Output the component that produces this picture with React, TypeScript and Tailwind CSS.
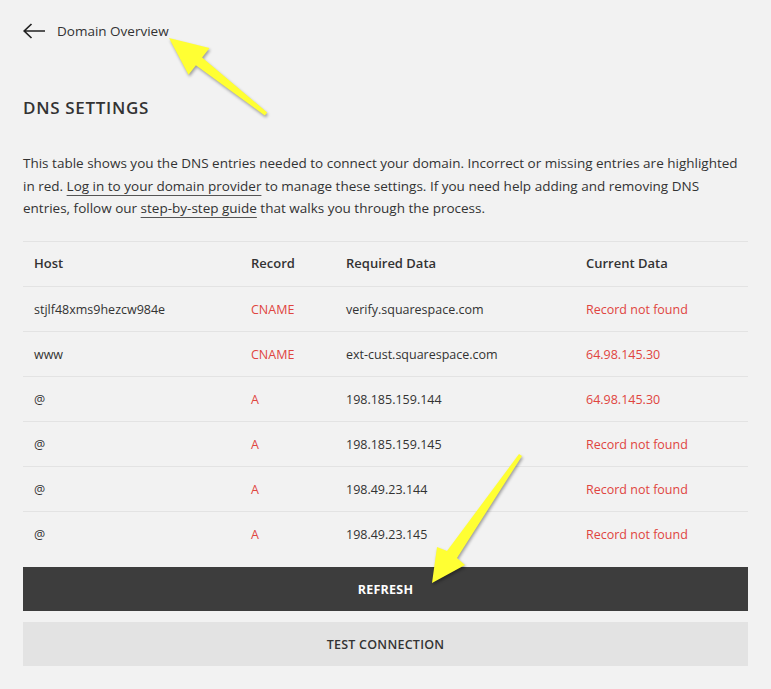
type DnsRow = {
  host: string;
  record: string;
  required: string;
  current: string;
};

const rows: DnsRow[] = [
  { host: "stjlf48xms9hezcw984e", record: "CNAME", required: "verify.squarespace.com", current: "Record not found" },
  { host: "www", record: "CNAME", required: "ext-cust.squarespace.com", current: "64.98.145.30" },
  { host: "@", record: "A", required: "198.185.159.144", current: "64.98.145.30" },
  { host: "@", record: "A", required: "198.185.159.145", current: "Record not found" },
  { host: "@", record: "A", required: "198.49.23.144", current: "Record not found" },
  { host: "@", record: "A", required: "198.49.23.145", current: "Record not found" },
];

const cols = "grid grid-cols-[217px_95px_240px_1fr] items-center";
const link = "underline decoration-[#555] decoration-1 underline-offset-[4px]";

// annotation arrows drawn on top of the screenshot
function Annotations() {
  return (
    <svg
      className="pointer-events-none absolute inset-0"
      width="771"
      height="689"
      viewBox="0 0 771 689"
      style={{ filter: "drop-shadow(1px 2px 1.5px rgba(0,0,0,0.35))" }}
    >
      <polygon
        fill="#ffff33"
        points="169,38 209.5,48 202.1,57.5 267.2,112.4 264.8,115.6 195.9,65.3 188.5,74.8"
      />
      <polygon
        fill="#ffff33"
        points="432,583 437,547 447,551 519,454 522,456 457,558 465,565"
      />
    </svg>
  );
}

export default function App() {
  return (
    <div
      className="relative min-h-[689px] w-full bg-[#f2f2f2] px-[23px] pt-[20px] text-[#333]"
      style={{ fontFamily: '"Open Sans", "Liberation Sans", sans-serif' }}
    >
      <div className="flex h-[22px] items-center gap-[12px]">
        <svg width="22" height="16" viewBox="0 0 22 16" fill="none" stroke="#222" strokeWidth="1.7">
          <path d="M1 8H22M8.5 1L1.2 8L8.5 15" />
        </svg>
        <span className="text-[13.5px] text-[#333]">Domain Overview</span>
      </div>

      <h1 className="mt-[54px] text-[17px] font-semibold leading-[24px] tracking-[0.04em] text-[#333]">
        DNS SETTINGS
      </h1>

      {/* lines kept as in the reference's wrap */}
      <div className="mt-[32px] text-[13.5px] leading-[22.5px] text-[#333]">
        <p className="whitespace-nowrap">
          This table shows you the DNS entries needed to connect your domain. Incorrect or missing entries are
          highlighted
        </p>
        <p className="whitespace-nowrap">
          in red. <a className={link}>Log in to your domain provider</a> to manage these settings. If you need help
          adding and removing DNS
        </p>
        <p className="whitespace-nowrap">
          entries, follow our <a className={link}>step-by-step guide</a> that walks you through the process.
        </p>
      </div>

      <div className="mt-[21px] border-t border-[#e3e3e3]">
        <div className={`${cols} h-[45px] border-b border-[#e3e3e3] text-[13px] font-semibold text-[#333]`}>
          <div className="pl-[11px]">Host</div>
          <div className="pl-[11px]">Record</div>
          <div className="pl-[11px]">Required Data</div>
          <div className="pl-[11px]">Current Data</div>
        </div>
        {rows.map((r, i) => (
          <div
            key={i}
            className={`${cols} h-[45px] pt-[3px] text-[12.5px] ${i < rows.length - 1 ? "border-b border-[#e3e3e3]" : ""}`}
          >
            <div className="pl-[11px] text-[#333]">{r.host}</div>
            <div className="pl-[11px] text-[#e0453f]">{r.record}</div>
            <div className="pl-[11px] text-[#333]">{r.required}</div>
            <div className="pl-[11px] text-[#e0453f]">{r.current}</div>
          </div>
        ))}
      </div>

      <button className="mt-[10px] flex h-[44px] w-full items-center justify-center bg-[#3d3d3d] pt-[3px] text-[12.5px] font-bold tracking-[0.02em] text-white">
        REFRESH
      </button>
      <button className="mt-[11px] flex h-[44px] w-full items-center justify-center bg-[#e3e3e3] pt-[3px] text-[12.5px] font-semibold tracking-[0.02em] text-[#333]">
        TEST CONNECTION
      </button>

      <Annotations />
    </div>
  );
}
